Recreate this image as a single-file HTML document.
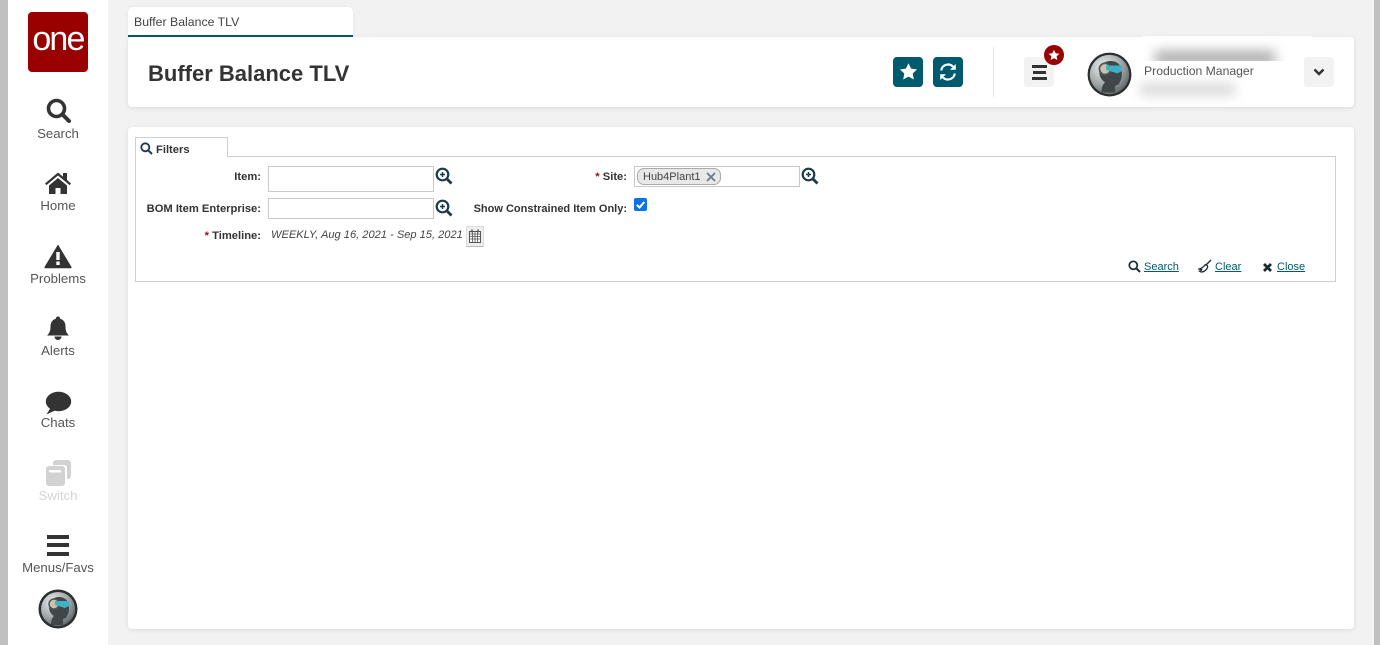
<!DOCTYPE html>
<html><head><meta charset="utf-8"><style>
*{box-sizing:border-box}
html,body{margin:0;padding:0;width:1380px;height:645px;overflow:hidden;background:#f2f2f2;font-family:"Liberation Sans",sans-serif;color:#333}
.a{position:absolute}
.nav{position:absolute;left:8px;width:100px;text-align:center;font-size:13.2px;color:#555;line-height:16px}
.card{position:absolute;background:#fff;border-radius:4px;box-shadow:0 1px 5px rgba(0,0,0,.1)}
.lbl{position:absolute;font-size:11.2px;font-weight:bold;color:#333;text-align:right;line-height:14px;white-space:nowrap}
.lbl i{color:#a01010;font-style:normal}
.inp{position:absolute;background:#fff;border:1px solid #c8c8c8}
.lnk{position:absolute;font-size:11px;color:#005a6e;text-decoration:underline;line-height:14px}
.tb{position:absolute;width:30px;height:30px;border-radius:4px}
</style></head><body>
<div class="a" style="left:0;top:0;width:8px;height:645px;background:#c0c0c0"></div>
<div class="a" style="left:1374px;top:0;width:6px;height:645px;background:#c0c0c0"></div>
<div class="a" style="left:8px;top:0;width:100px;height:645px;background:#fff"></div>
<div class="a" style="left:28px;top:12px;width:60px;height:60px;background:#990000;border-radius:4px;color:#fff;font-size:34px;line-height:54px;text-align:center;letter-spacing:-1.8px">one</div>

<svg class="a" style="left:46px;top:98px" width="26" height="26" viewBox="0 0 26 26"><circle cx="10.500" cy="10.500" r="8" fill="none" stroke="#333" stroke-width="3.600"/><path d="M16.500 16.500L23 23" stroke="#333" stroke-width="4" stroke-linecap="round"/></svg>
<div class="nav" style="top:126px">Search</div>
<svg class="a" style="left:44px;top:171px" width="28" height="24" viewBox="0 0 28 24"><path d="M1 12.500L14 1.500l5 4.200V2h4v7l4 3.500-1.400 1.600L14 4.500 2.400 14.100z" fill="#333"/><path d="M5 14.500L14 7l9 7.500V23h-6.500v-6h-5v6H5z" fill="#333"/></svg>
<div class="nav" style="top:198px">Home</div>
<svg class="a" style="left:44px;top:243px" width="28" height="26" viewBox="0 0 28 26"><path d="M14 1.500L27.500 24a.8.800 0 0 1-.7 1.200H1.200A.8.800 0 0 1 .5 24z" fill="#333"/><rect x="12.300" y="9" width="3.400" height="8" fill="#fff"/><rect x="12.300" y="18.500" width="3.400" height="3.500" fill="#fff"/></svg>
<div class="nav" style="top:271px">Problems</div>
<svg class="a" style="left:46px;top:316px" width="24" height="25" viewBox="0 0 24 25"><circle cx="12" cy="2.500" r="2" fill="#333"/><path d="M12 2.500c5 0 7.500 3.500 7.500 8 0 4.500 1 6.500 3.500 9H1c2.500-2.500 3.500-4.500 3.500-9 0-4.500 2.500-8 7.500-8z" fill="#333"/><path d="M8.500 20.500h7a3.500 3.500 0 0 1-7 0z" fill="#333"/></svg>
<div class="nav" style="top:343px">Alerts</div>
<svg class="a" style="left:45px;top:391px" width="27" height="24" viewBox="0 0 27 24"><ellipse cx="13.500" cy="10.500" rx="12.700" ry="9.700" fill="#333"/><path d="M6 16L1.500 23.500 11 19z" fill="#333"/></svg>
<div class="nav" style="top:415px">Chats</div>
<svg class="a" style="left:45px;top:460px" width="27" height="27" viewBox="0 0 27 27"><path d="M8 3a3 3 0 0 1 3-3h12a3 3 0 0 1 3 3v13a3 3 0 0 1-3 3h-1V8a3 3 0 0 0-3-3H8z" fill="#d2d2d2"/><rect x="1" y="6" width="19" height="20" rx="3" fill="#d2d2d2"/><rect x="4" y="10" width="12" height="2.500" fill="#fff"/></svg>
<div class="nav" style="top:488px;color:#d4d4d4">Switch</div>
<div class="a" style="left:47px;top:535px;width:22px;height:4px;background:#333"></div>
<div class="a" style="left:47px;top:543px;width:22px;height:4px;background:#333"></div>
<div class="a" style="left:47px;top:552px;width:22px;height:4px;background:#333"></div>
<div class="nav" style="top:560px">Menus/Favs</div>
<svg class="a" style="left:38px;top:589px" width="40" height="40" viewBox="0 0 40 40"><defs><radialGradient id="g1" cx=".35" cy=".3" r=".8"><stop offset="0" stop-color="#eceeee"/><stop offset=".6" stop-color="#9ea3a5"/><stop offset="1" stop-color="#555a5c"/></radialGradient></defs><circle cx="20" cy="20" r="19.500" fill="#2a2e30"/><circle cx="20" cy="20" r="17" fill="url(#g1)"/><path d="M13 36c0-5 1-7 3-9-3-2-5-5-5-9 0-6 4-10 10-10s10 4 10 10c0 3 0 5-1 7l-2 4-3 1v6z" fill="#3f474b"/><circle cx="16" cy="15" r="5" fill="#c9c4ae" stroke="#555" stroke-width="1.500"/><path d="M17 12h14v5l-4 2-10-3z" fill="#3fb0c6"/></svg>

<!-- tab -->
<div class="a" style="left:128px;top:7px;width:225px;height:30px;background:#fff;border-radius:5px 5px 0 0;border-bottom:2px solid #005a6e;box-shadow:0 0 4px rgba(0,0,0,.06);font-size:12.300px;line-height:31px;padding-left:6px;color:#444">Buffer Balance TLV</div>
<!-- header card -->
<div class="card" style="left:128px;top:37px;width:1226px;height:70px"></div>
<div class="a" style="left:148px;top:60px;font-size:22px;font-weight:bold;color:#333;line-height:28px;white-space:nowrap">Buffer Balance TLV</div>

<div class="tb" style="left:893px;top:57px;background:#005a6e"></div>
<svg class="a" style="left:899px;top:62px" width="19" height="19" viewBox="0 0 24 24"><path d="M12 1.500l3.300 6.900 7.500 1-5.500 5.200 1.400 7.500L12 18.400l-6.700 3.700 1.400-7.500L1.200 9.400l7.500-1z" fill="#fff"/></svg>
<div class="tb" style="left:933px;top:57px;background:#005a6e"></div>
<svg class="a" style="left:939px;top:63px" width="18" height="18" viewBox="0 0 18 18"><path d="M2.200 7.500A7 7 0 0 1 14 3.500" fill="none" stroke="#fff" stroke-width="2.200"/><path d="M16.800 1v5.800H11z" fill="#fff"/><path d="M15.800 10.500A7 7 0 0 1 4 14.500" fill="none" stroke="#fff" stroke-width="2.200"/><path d="M1.200 17v-5.800H7z" fill="#fff"/></svg>
<div class="a" style="left:993px;top:47px;width:1px;height:50px;background:#e8e8e8"></div>
<div class="tb" style="left:1024px;top:57px;background:#f2f2f2"></div>
<div class="a" style="left:1032px;top:65px;width:15px;height:3px;background:#333"></div>
<div class="a" style="left:1033px;top:71px;width:13px;height:3px;background:#333"></div>
<div class="a" style="left:1032px;top:77px;width:15px;height:3px;background:#333"></div>
<div class="a" style="left:1044px;top:45px;width:20px;height:20px;border-radius:50%;background:#990000"></div>
<svg class="a" style="left:1048px;top:49px" width="12" height="12" viewBox="0 0 24 24"><path d="M12 1.500l3.300 6.900 7.500 1-5.500 5.200 1.400 7.500L12 18.400l-6.700 3.700 1.400-7.500L1.200 9.400l7.500-1z" fill="#fff"/></svg>
<svg class="a" style="left:1087px;top:52px" width="45" height="45" viewBox="0 0 40 40"><defs><radialGradient id="g2" cx=".35" cy=".3" r=".8"><stop offset="0" stop-color="#eceeee"/><stop offset=".6" stop-color="#9ea3a5"/><stop offset="1" stop-color="#555a5c"/></radialGradient></defs><circle cx="20" cy="20" r="19.500" fill="#2a2e30"/><circle cx="20" cy="20" r="17.500" fill="url(#g2)"/><path d="M13 36c0-5 1-7 3-9-3-2-5-5-5-9 0-6 4-10 10-10s10 4 10 10c0 3 0 5-1 7l-2 4-3 1v6z" fill="#3f474b"/><circle cx="16" cy="15" r="5" fill="#c9c4ae" stroke="#555" stroke-width="1.500"/><path d="M17 12h14v5l-4 2-10-3z" fill="#3fb0c6"/></svg>
<div class="a" style="left:1143px;top:36px;width:169px;height:25px;background:#fff;overflow:hidden"><div class="a" style="left:12px;top:15px;width:120px;height:14px;background:#aaa;filter:blur(6px)"></div></div>
<div class="a" style="left:1144px;top:63px;font-size:12.200px;line-height:16px;color:#555;white-space:nowrap">Production Manager</div>
<div class="a" style="left:1140px;top:85px;width:95px;height:9px;background:#ccc;filter:blur(6px)"></div>
<div class="tb" style="left:1304px;top:57px;background:#f2f2f2"></div>
<svg class="a" style="left:1313px;top:68px" width="12" height="8" viewBox="0 0 12 8"><path d="M1.500 1.500L6 6l4.500-4.500" fill="none" stroke="#333" stroke-width="2.400"/></svg>

<!-- main card -->
<div class="card" style="left:128px;top:127px;width:1226px;height:502px"></div>
<div class="a" style="left:135px;top:156px;width:1201px;height:126px;border:1px solid #cfcfcf"></div>
<div class="a" style="left:135px;top:137px;width:93px;height:20px;background:#fff;border:1px solid #cfcfcf;border-bottom:none"></div>
<svg class="a" style="left:140px;top:142px" width="13" height="13" viewBox="0 0 13 13"><circle cx="5.300" cy="5.300" r="4" fill="none" stroke="#1d3a4a" stroke-width="1.800"/><path d="M8.300 8.300L12 12" stroke="#1d3a4a" stroke-width="2"/></svg>
<div class="lbl" style="left:156px;top:143px;text-align:left">Filters</div>

<div class="lbl" style="left:140px;width:121px;top:170px">Item:</div>
<div class="inp" style="left:268px;top:166px;width:166px;height:26px"></div>
<svg class="a" style="left:435px;top:167px" width="18" height="18" viewBox="0 0 18 18"><circle cx="7.500" cy="7.500" r="5.800" fill="none" stroke="#1d3a4a" stroke-width="2.200"/><path d="M12 12l4.500 4.500" stroke="#1d3a4a" stroke-width="2.800"/><path d="M5 7.500h5M7.500 5v5" stroke="#1d3a4a" stroke-width="1.500"/></svg>
<div class="lbl" style="left:500px;width:127px;top:170px"><i>*</i> Site:</div>
<div class="inp" style="left:634px;top:166px;width:166px;height:21px"></div>
<div class="a" style="left:637px;top:168px;width:84px;height:17px;background:#e8e8e8;border:1px solid #aaa;border-radius:7px;font-size:11px;line-height:16px;padding-left:5px;color:#444;white-space:nowrap">Hub4Plant1</div>
<svg class="a" style="left:706px;top:172px" width="10" height="10" viewBox="0 0 10 10"><path d="M1 1l8 8M9 1l-8 8" stroke="#6b7a88" stroke-width="1.800"/></svg>
<svg class="a" style="left:801px;top:167px" width="18" height="18" viewBox="0 0 18 18"><circle cx="7.500" cy="7.500" r="5.800" fill="none" stroke="#1d3a4a" stroke-width="2.200"/><path d="M12 12l4.500 4.500" stroke="#1d3a4a" stroke-width="2.800"/><path d="M5 7.500h5M7.500 5v5" stroke="#1d3a4a" stroke-width="1.500"/></svg>

<div class="lbl" style="left:140px;width:121px;top:202px">BOM Item Enterprise:</div>
<div class="inp" style="left:268px;top:198px;width:166px;height:21px"></div>
<svg class="a" style="left:435px;top:199px" width="18" height="18" viewBox="0 0 18 18"><circle cx="7.500" cy="7.500" r="5.800" fill="none" stroke="#1d3a4a" stroke-width="2.200"/><path d="M12 12l4.500 4.500" stroke="#1d3a4a" stroke-width="2.800"/><path d="M5 7.500h5M7.500 5v5" stroke="#1d3a4a" stroke-width="1.500"/></svg>
<div class="lbl" style="left:460px;width:167px;top:202px;font-size:11px">Show Constrained Item Only:</div>
<div class="a" style="left:634px;top:198px;width:13px;height:13px;background:#0b72e7;border-radius:2px"></div>
<svg class="a" style="left:634px;top:198px" width="13" height="13" viewBox="0 0 13 13"><path d="M2.800 6.800l2.700 2.700 4.800-5.500" fill="none" stroke="#fff" stroke-width="2"/></svg>

<div class="lbl" style="left:140px;width:121px;top:229px"><i>*</i> Timeline:</div>
<div class="a" style="left:271px;top:227px;font-size:11.100px;font-style:italic;line-height:16px;color:#444;white-space:nowrap">WEEKLY, Aug 16, 2021 - Sep 15, 2021</div>
<div class="a" style="left:466px;top:226px;width:18px;height:21px;background:#eee;border:1px solid #ddd;border-bottom-color:#bbb"></div>
<svg class="a" style="left:469px;top:229px" width="12" height="14" viewBox="0 0 12 14"><rect x=".5" y="2.500" width="11" height="11" fill="#fff" stroke="#555"/><path d="M.5 5h11M.5 7.500h11M.5 10h11M3.500 3v10M6 3v10M8.500 3v10" stroke="#555" stroke-width=".8"/><path d="M3 .5v3M9 .5v3" stroke="#555" stroke-width="1.500"/></svg>

<svg class="a" style="left:1128px;top:260px" width="13" height="13" viewBox="0 0 13 13"><circle cx="5.300" cy="5.300" r="4" fill="none" stroke="#1d2a35" stroke-width="1.700"/><path d="M8.300 8.300L12 12" stroke="#1d2a35" stroke-width="2"/></svg>
<div class="lnk" style="left:1144px;top:260px">Search</div>
<svg class="a" style="left:1198px;top:259px" width="14" height="15" viewBox="0 0 14 15"><path d="M13 1L8 6" stroke="#1d2a35" stroke-width="1.300"/><path d="M7.500 5.500c1.500.5 2.500 1.500 2 3-1 2.500-3.500 4.500-6 4.500-.7 0-1.500-.3-2-.8 1.500-.2 2-1 2.200-1.700-.7 0-1.700 0-2.700-.5 2-.3 4-1.500 6.500-4.500z" fill="none" stroke="#1d2a35" stroke-width="1.300"/></svg>
<div class="lnk" style="left:1215px;top:260px">Clear</div>
<svg class="a" style="left:1262px;top:262px" width="11" height="11" viewBox="0 0 11 11"><path d="M2 2l7 7M9 2l-7 7" stroke="#1d2a35" stroke-width="2.800"/></svg>
<div class="lnk" style="left:1277px;top:260px">Close</div>
</body></html>
